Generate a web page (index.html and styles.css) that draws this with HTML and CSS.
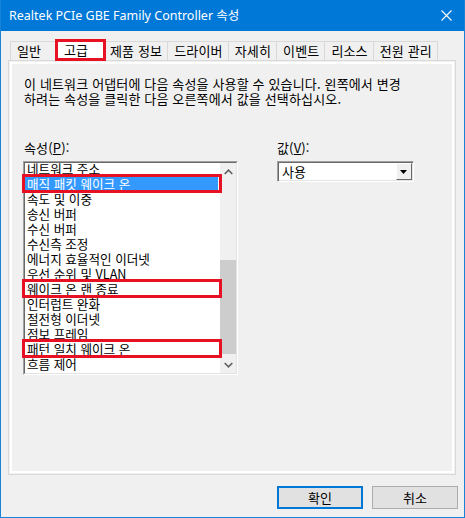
FILE: index.html
```html
<!DOCTYPE html>
<html lang="ko">

<head>
  <meta charset="UTF-8">
  <title>Realtek PCIe GBE Family Controller 속성</title>
  <link rel="stylesheet" href="styles.css">
</head>

<body>
  <div class="window">
    <div class="titlebar">
      <span class="title">Realtek PCIe GBE Family Controller 속성</span>
      <svg class="close" width="11" height="11" viewBox="0 0 11 11">
        <path d="M0.5 0.5 L10.5 10.5 M10.5 0.5 L0.5 10.5" stroke="#fff" stroke-width="1.1" fill="none" />
      </svg>
    </div>

    <div class="content">
      <div class="tabs">
        <div class="tab">일반</div>
        <div class="tab active">고급</div>
        <div class="tab">제품 정보</div>
        <div class="tab">드라이버</div>
        <div class="tab">자세히</div>
        <div class="tab">이벤트</div>
        <div class="tab">리소스</div>
        <div class="tab">전원 관리</div>
      </div>

      <div class="panel">
        <p class="desc">이 네트워크 어댑터에 다음 속성을 사용할 수 있습니다. 왼쪽에서 변경<br>하려는 속성을 클릭한 다음 오른쪽에서 값을 선택하십시오.</p>

        <div class="fields">
          <div class="field-left">
            <div class="label">속성(<u>P</u>):</div>
            <div class="listbox">
              <div class="list-inner">
                <div class="list-items">
                  <div class="item">네트워크 주소</div>
                  <div class="item selected">매직 패킷 웨이크 온</div>
                  <div class="item">속도 및 이중</div>
                  <div class="item">송신 버퍼</div>
                  <div class="item">수신 버퍼</div>
                  <div class="item">수신측 조정</div>
                  <div class="item">에너지 효율적인 이더넷</div>
                  <div class="item">우선 순위 및 VLAN</div>
                  <div class="item">웨이크 온 랜 종료</div>
                  <div class="item">인터럽트 완화</div>
                  <div class="item">절전형 이더넷</div>
                  <div class="item">점보 프레임</div>
                  <div class="item">패턴 일치 웨이크 온</div>
                  <div class="item">흐름 제어</div>
                </div>
                <div class="scrollbar">
                  <div class="arrow">
                    <svg width="9" height="6" viewBox="0 0 9 6">
                      <path d="M0.7 5 L4.5 1.2 L8.3 5" stroke="#606060" stroke-width="1.6" fill="none" />
                    </svg>
                  </div>
                  <div class="track">
                    <div class="thumb"></div>
                  </div>
                  <div class="arrow">
                    <svg width="9" height="6" viewBox="0 0 9 6">
                      <path d="M0.7 1 L4.5 4.8 L8.3 1" stroke="#606060" stroke-width="1.6" fill="none" />
                    </svg>
                  </div>
                </div>
              </div>
              <!-- red annotation boxes -->
              <div class="mark mark-1"></div>
              <div class="mark mark-2"></div>
              <div class="mark mark-3"></div>
            </div>
          </div>

          <div class="field-right">
            <div class="label">값(<u>V</u>):</div>
            <div class="combo">
              <span class="combo-text">사용</span>
              <div class="combo-btn">
                <svg width="8" height="4" viewBox="0 0 8 4">
                  <path d="M0 0 H7 L3.5 4 Z" fill="#000" />
                </svg>
              </div>
            </div>
          </div>
        </div>
      </div>

      <div class="buttons">
        <button class="btn default">확인</button>
        <button class="btn">취소</button>
      </div>
    </div>
  </div>
</body>

</html>
```

FILE: styles.css
```css
body {
  margin: 0;
  font-family: "Noto Sans CJK KR", "Noto Sans", sans-serif;
  font-size: 13px;
  letter-spacing: 0.15px;
  color: #000;
  background: #fff;
}

.window {
  width: 465px;
  height: 518px;
  box-sizing: border-box;
  border: 1px solid #1883d7;
  border-top: none;
  background-color: #f0f0f0;
  display: flex;
  flex-direction: column;
}

.titlebar {
  height: 31px;
  background-color: #0078d7;
  color: #fff;
  display: flex;
  align-items: center;
  justify-content: space-between;
  padding: 0 12px 0 8px;
  flex-shrink: 0;
}

.title {
  font-family: "Noto Sans", "Noto Sans CJK KR", sans-serif;
  font-size: 12.5px;
  letter-spacing: 0;
  line-height: 16px;
  margin-top: 1px;
}

.close {
  display: block;
}

.content {
  flex: 1;
  padding: 8px 0 0 7px;
}

/* tabs */
.tabs {
  display: flex;
  align-items: flex-end;
  height: 21px;
  margin-left: 2px;
}

.tab {
  position: relative;
  height: 19px;
  min-width: 48px;
  box-sizing: border-box;
  padding: 0 5px 0 6px;
  margin-right: -1px;
  border: 1px solid #d9d9d9;
  border-bottom: none;
  background-color: #f0f0f0;
  line-height: 17px;
  white-space: nowrap;
}

.tab.active {
  z-index: 2;
  height: 22px;
  min-width: 51px;
  margin: 0 -3px -1px -2px;
  padding: 0 8px 0 8px;
  background-color: #fff;
  line-height: 20px;
  outline: 3px solid #e81123;
  outline-offset: -3px;
  border-color: #e81123;
}

/* panel */
.panel {
  width: 448px;
  height: 415px;
  box-sizing: border-box;
  border: 1px solid #d9d9d9;
  box-shadow: inset 0 0 0 1px #f0f0f0, inset 0 0 0 3px #fff;
  padding: 15px 15px 0 15px;
}

.desc {
  margin: 0;
  line-height: 15px;
}

.fields {
  display: flex;
  margin-top: 34px;
}

.label {
  line-height: 15px;
}

.field-left {
  width: 253px;
}

.listbox {
  position: relative;
  width: 215px;
  height: 214px;
  box-sizing: border-box;
  margin: 6px 0 0 -1px;
  border: 1px solid;
  border-color: #a0a0a0 #fff #fff #a0a0a0;
}

.list-inner {
  display: flex;
  height: 100%;
  box-sizing: border-box;
  border: 1px solid;
  border-color: #696969 #e3e3e3 #e3e3e3 #696969;
  background-color: #fff;
  overflow: hidden;
}

.list-items {
  flex: 1;
  margin-top: -2px;
  font-size: 12.6px;
  letter-spacing: 0;
}

.item {
  height: 15px;
  line-height: 15px;
  padding-left: 2px;
  margin-right: 2px;
  white-space: nowrap;
}

.item.selected {
  background-color: #3399ff;
  color: #fff;
}

.scrollbar {
  width: 16px;
  display: flex;
  flex-direction: column;
  background-color: #f0f0f0;
}

.arrow {
  height: 17px;
  display: flex;
  align-items: center;
  justify-content: center;
}

.track {
  flex: 1;
  padding-top: 80px;
  padding-bottom: 2px;
}

.thumb {
  height: 94px;
  background-color: #cdcdcd;
}

.mark {
  position: absolute;
  left: -2px;
  width: 200px;
  height: 19px;
  box-sizing: border-box;
  border: 3px solid #e81123;
}

.mark-1 {
  top: 12px;
}

.mark-2 {
  top: 117px;
}

.mark-3 {
  top: 177px;
}

.combo {
  display: flex;
  align-items: center;
  width: 137px;
  height: 21px;
  margin-top: 6px;
  box-sizing: border-box;
  border: 1px solid;
  border-color: #a0a0a0 #fff #fff #a0a0a0;
  box-shadow: inset 1px 1px 0 #696969, inset -1px -1px 0 #e3e3e3;
  background-color: #fff;
  padding: 1px 1px 1px 4px;
}

.combo-text {
  flex: 1;
  line-height: 17px;
}

.combo-btn {
  width: 16px;
  height: 17px;
  box-sizing: border-box;
  background-color: #f0f0f0;
  border: 1px solid;
  border-color: #fff #696969 #696969 #fff;
  display: flex;
  align-items: center;
  justify-content: center;
}

.combo-btn svg {
  display: block;
}

/* bottom buttons */
.buttons {
  display: flex;
  justify-content: flex-end;
  gap: 9px;
  padding: 11px 6px 0 0;
}

.btn {
  width: 86px;
  height: 23px;
  box-sizing: border-box;
  border: 1px solid #adadad;
  background-color: #e1e1e1;
  font-family: "Noto Sans CJK KR", sans-serif;
  font-size: 13px;
  color: #000;
  padding: 0;
}

.btn.default {
  border: 2px solid #0078d7;
}
```
